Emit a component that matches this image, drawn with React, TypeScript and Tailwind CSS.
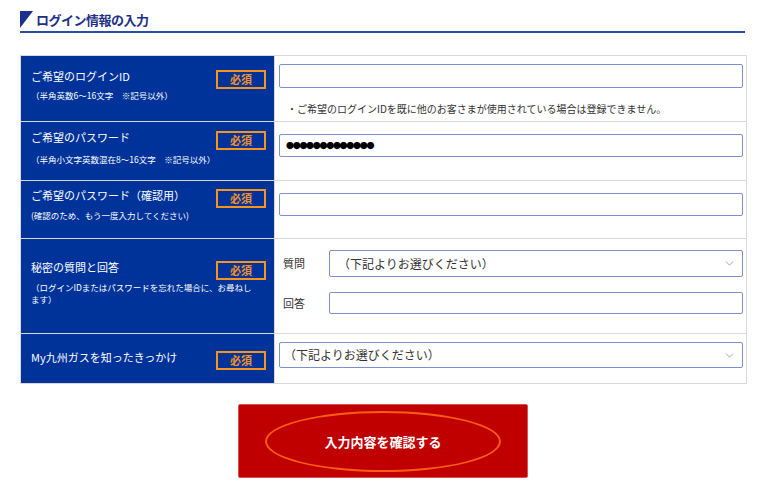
import { ChevronDown } from "lucide-react";
import type { ReactNode } from "react";

function Badge() {
  return (
    <div className="w-[50px] h-[19px] border-2 border-[#f7941d] flex items-center justify-center text-[11px] font-bold text-[#f0922a] leading-none shrink-0 mt-[1px]">
      必須
    </div>
  );
}

function Label({
  title,
  note,
  pt,
  noteMt,
}: {
  title: string;
  note?: ReactNode;
  pt: string;
  noteMt: string;
}) {
  return (
    <div className={`w-[253px] shrink-0 bg-[#003399] pl-[10px] pr-[8px] text-white ${pt}`}>
      <div className="flex items-start justify-between">
        <div className="text-[11px] leading-[14px]">{title}</div>
        <Badge />
      </div>
      {note && <div className={`text-[8.5px] leading-[12px] ${noteMt}`}>{note}</div>}
    </div>
  );
}

function Select({ className }: { className: string }) {
  return (
    <div
      className={`flex items-center justify-between border border-[#7d90d2] rounded-[2px] bg-white pl-[4px] pr-[6px] ${className}`}
    >
      <span className="text-[12px] text-[#333]">（下記よりお選びください）</span>
      <ChevronDown size={13} strokeWidth={1.2} className="text-[#777]" />
    </div>
  );
}

export default function App() {
  return (
    <div className="w-[768px] h-[494px] bg-white font-['Noto_Sans_CJK_JP','Liberation_Sans',sans-serif] px-[20px] pt-[11px]">
      <div className="flex items-start gap-[2px] border-b-2 border-[#2a4ea3] pb-[3px] w-[725px]">
        <svg width="14" height="17" viewBox="0 0 14 17" className="shrink-0">
          <polygon points="0,0 13,0 0,17" fill="#1b2f8e" />
        </svg>
        <div className="text-[13px] font-bold text-[#1d2f86] leading-[17px] tracking-[-0.5px]">ログイン情報の入力</div>
      </div>

      <div className="mt-[22px] w-[727px] border border-[#d9d9d9]">
        {/* Row 1 */}
        <div className="flex h-[66px] border-b border-[#d9d9d9]">
          <Label title="ご希望のログインID" note="（半角英数6～16文字　※記号以外）" pt="pt-[13px]" noteMt="mt-0" />
          <div className="flex-1 pl-[4px] pr-[3px] pt-[8px] border-l border-[#d9d9d9]">
            <input readOnly className="block w-full h-[24px] border border-[#7d90d2] rounded-[2px] outline-none" />
            <div className="text-[10px] text-[#333] mt-[14px] pl-[8px] leading-[14px]">
              ・ご希望のログインIDを既に他のお客さまが使用されている場合は登録できません。
            </div>
          </div>
        </div>
        {/* Row 2 */}
        <div className="flex h-[59px] border-b border-[#d9d9d9]">
          <Label title="ご希望のパスワード" note="（半角小文字英数混在8～16文字　※記号以外）" pt="pt-[8px]" noteMt="mt-[3px]" />
          <div className="flex-1 pl-[4px] pr-[3px] pt-[12px] border-l border-[#d9d9d9]">
            <div className="flex items-center h-[23px] border border-[#7d90d2] rounded-[2px] pl-[6px]">
              <span className="text-[8px] tracking-[-1.3px] text-black leading-none">●●●●●●●●●●●●●</span>
            </div>
          </div>
        </div>
        {/* Row 3 */}
        <div className="flex h-[58px] border-b border-[#d9d9d9]">
          <Label title="ご希望のパスワード（確認用）" note="(確認のため、もう一度入力してください)" pt="pt-[7px]" noteMt="mt-[1px]" />
          <div className="flex-1 pl-[4px] pr-[3px] pt-[12px] border-l border-[#d9d9d9]">
            <input readOnly className="block w-full h-[23px] border border-[#7d90d2] rounded-[2px] outline-none" />
          </div>
        </div>
        {/* Row 4 */}
        <div className="flex h-[95px] border-b border-[#d9d9d9]">
          <Label
            title="秘密の質問と回答"
            note={
              <>
                （ログインIDまたはパスワードを忘れた場合に、お尋ねし
                <br />
                ます）
              </>
            }
            pt="pt-[21px]"
            noteMt="mt-[1px]"
          />
          <div className="flex-1 pl-[8px] pr-[3px] pt-[11px] border-l border-[#d9d9d9]">
            <div className="flex items-center">
              <div className="w-[46px] text-[11px] text-[#333]">質問</div>
              <Select className="flex-1 h-[27px] pl-[8px]" />
            </div>
            <div className="flex items-center mt-[15px]">
              <div className="w-[46px] text-[11px] text-[#333]">回答</div>
              <input readOnly className="block flex-1 h-[22px] border border-[#7d90d2] rounded-[2px] outline-none" />
            </div>
          </div>
        </div>
        {/* Row 5 */}
        <div className="flex h-[49px]">
          <Label title="My九州ガスを知ったきっかけ" pt="pt-[16px]" noteMt="" />
          <div className="flex-1 pl-[4px] pr-[3px] pt-[8px] border-l border-[#d9d9d9]">
            <Select className="w-full h-[26px]" />
          </div>
        </div>
      </div>

      <div className="flex justify-center mt-[20px] pr-[2px]">
        <button className="w-[290px] h-[74px] bg-[#c00000] border border-[#d85050] rounded-[2px] px-[26px] pt-[6px] pb-[5px]">
          <div className="w-full h-full rounded-[50%] border-2 border-[#ff5a14] flex items-center justify-center text-white text-[13px] font-bold">
            入力内容を確認する
          </div>
        </button>
      </div>
    </div>
  );
}
